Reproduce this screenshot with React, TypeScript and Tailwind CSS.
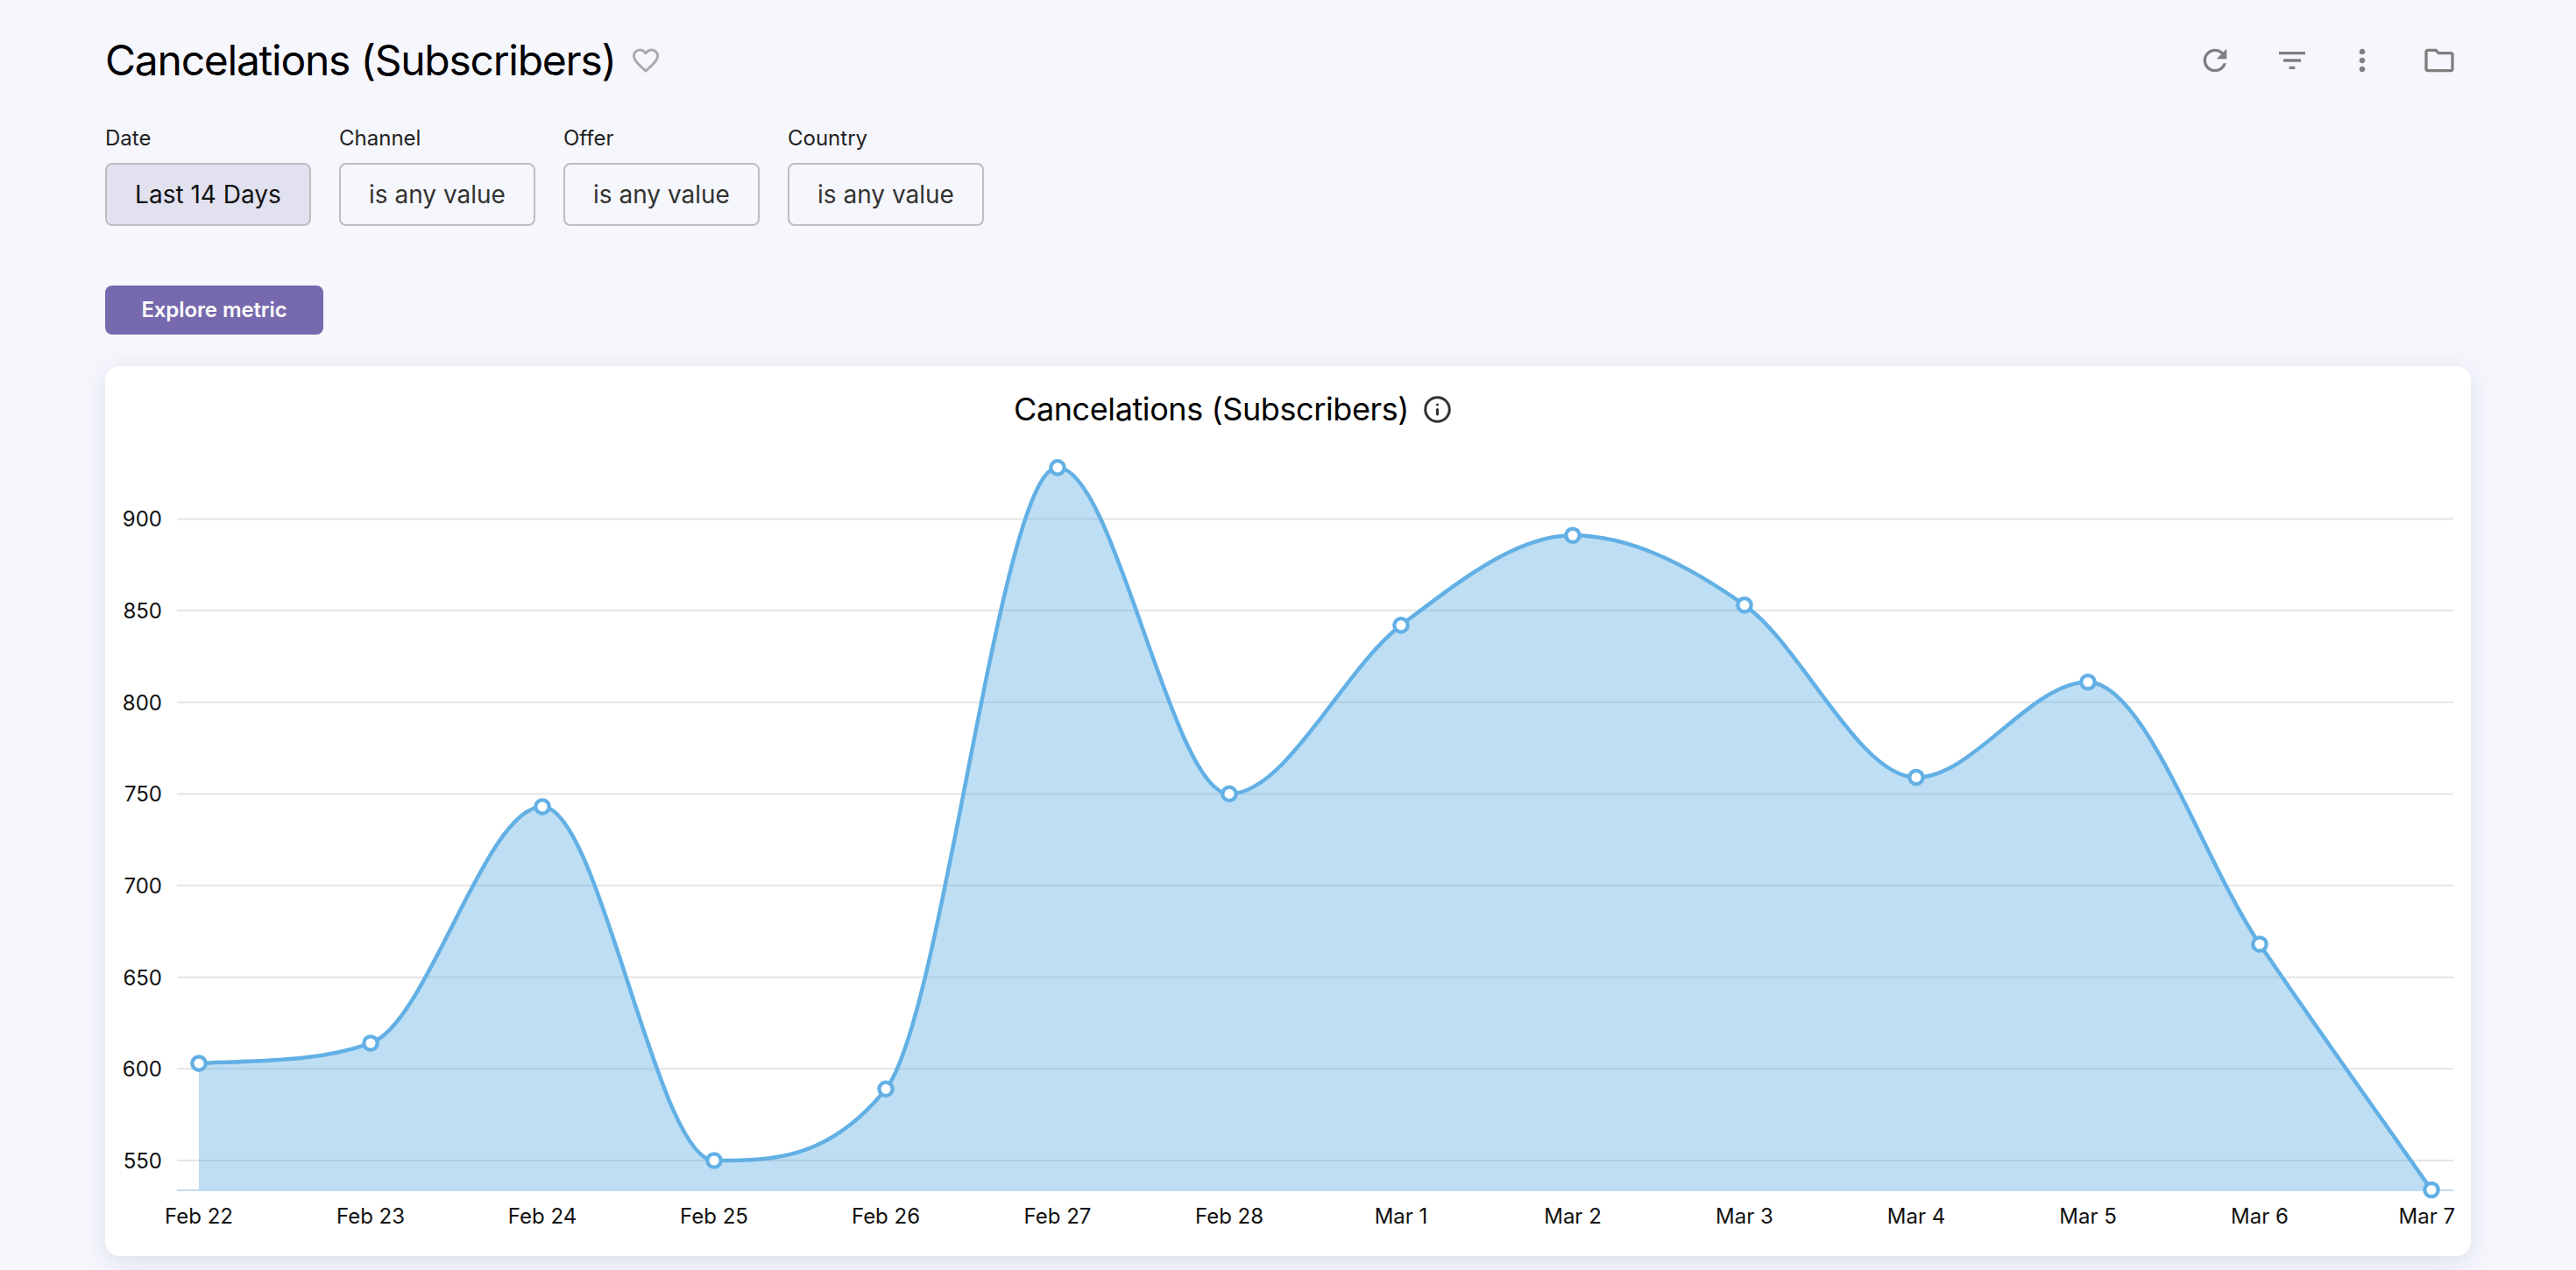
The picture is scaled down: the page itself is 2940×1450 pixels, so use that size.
import { Info } from "lucide-react";

const LABELS = ["Feb 22", "Feb 23", "Feb 24", "Feb 25", "Feb 26", "Feb 27", "Feb 28", "Mar 1", "Mar 2", "Mar 3", "Mar 4", "Mar 5", "Mar 6", "Mar 7"];
const VALUES = [603, 614, 743, 550, 589, 928, 750, 842, 891, 853, 759, 811, 668, 534];
const TICKS = [900, 850, 800, 750, 700, 650, 600, 550];

const yOf = (v: number) => 1325 - (v - 550) * 2.093;
const xOf = (i: number) => 227 + i * 196;
const BASE_Y = 1360;

// monotone cubic, same as the chart lib does it
function linePath(pts: [number, number][]) {
  const n = pts.length;
  const delta: number[] = [];
  for (let i = 0; i < n - 1; i++) delta.push((pts[i + 1][1] - pts[i][1]) / (pts[i + 1][0] - pts[i][0]));
  const m: number[] = new Array(n).fill(0);
  m[0] = delta[0];
  m[n - 1] = delta[n - 2];
  for (let i = 1; i < n - 1; i++) {
    m[i] = delta[i - 1] * delta[i] <= 0 ? 0 : (delta[i - 1] + delta[i]) / 2;
  }
  for (let i = 0; i < n - 1; i++) {
    if (delta[i] === 0) {
      m[i] = 0;
      m[i + 1] = 0;
      continue;
    }
    const a = m[i] / delta[i];
    const b = m[i + 1] / delta[i];
    const s = a * a + b * b;
    if (s > 9) {
      const t = 3 / Math.sqrt(s);
      m[i] = a * t * delta[i];
      m[i + 1] = b * t * delta[i];
    }
  }
  let d = `M${pts[0][0]} ${pts[0][1]}`;
  for (let i = 0; i < n - 1; i++) {
    const h = (pts[i + 1][0] - pts[i][0]) / 3;
    d += `C${pts[i][0] + h} ${pts[i][1] + m[i] * h} ${pts[i + 1][0] - h} ${pts[i + 1][1] - m[i + 1] * h} ${pts[i + 1][0]} ${pts[i + 1][1]}`;
  }
  return d;
}

function ToolIcon({ d, className }: { d: string; className?: string }) {
  return (
    <svg viewBox="0 0 24 24" className={`h-10 w-10 fill-[#7f7f7f] ${className ?? ""}`}>
      <path d={d} />
    </svg>
  );
}

function Filter({ label, value, active }: { label: string; value: string; active?: boolean }) {
  return (
    <div className="flex flex-col">
      <div className="mb-3 h-8 text-[24px] leading-8 text-[#222]">{label}</div>
      <div
        className={
          active
            ? "flex h-[72px] w-[235px] items-center justify-center rounded-lg border-2 border-[#bdbdc4] bg-[#e2e1f0] text-[28px] text-[#111]"
            : "flex h-[72px] w-[224px] items-center justify-center rounded-lg border-2 border-[#bdbdc4] text-[28px] text-[#333]"
        }
      >
        {value}
      </div>
    </div>
  );
}

function Chart() {
  const pts = VALUES.map((v, i) => [xOf(i), yOf(v)] as [number, number]);
  const line = linePath(pts);
  const area = `${line}L${xOf(13)} ${BASE_Y}L${xOf(0)} ${BASE_Y}Z`;
  return (
    <svg viewBox="120 498 2700 936" className="block h-[936px] w-[2700px]">
      {TICKS.map((t) => (
        <g key={t}>
          <line x1={202} x2={2800} y1={yOf(t)} y2={yOf(t)} stroke="#e5e5e5" strokeWidth={2} />
          <text x={185} y={yOf(t) + 9} textAnchor="end" fontSize={24} fill="#111">
            {t}
          </text>
        </g>
      ))}
      <line x1={202} x2={227} y1={1359} y2={1359} stroke="#c9d8ee" strokeWidth={2} />
      <line x1={2775} x2={2800} y1={1359} y2={1359} stroke="#c9d8ee" strokeWidth={2} />
      <path d={area} fill="rgba(93,173,226,0.4)" />
      <path d={line} fill="none" stroke="#62b0e5" strokeWidth={4.5} />
      {pts.map(([x, y], i) => (
        <circle key={i} cx={x} cy={y} r={7.7} fill="#fff" stroke="#62b0e5" strokeWidth={4.3} />
      ))}
      {LABELS.map((l, i) => (
        <text
          key={l}
          x={i === 13 ? 2802 : xOf(i)}
          y={1397}
          textAnchor={i === 13 ? "end" : "middle"}
          fontSize={24}
          fill="#111"
        >
          {l}
        </text>
      ))}
    </svg>
  );
}

export default function App() {
  return (
    <div className="min-h-screen bg-[#f6f7fd] px-[120px] pt-[49px] font-[family-name:Inter,sans-serif]">
      <div className="flex h-10 items-center pr-4">
        <h1 className="text-[48px] leading-10 font-normal tracking-[-1.25px] text-black">Cancelations (Subscribers)</h1>
        <svg viewBox="0 0 24 24" className="ml-[16px] h-9 w-9 fill-[#aaaaaa]">
          <path d="M16.5 3c-1.74 0-3.41.81-4.5 2.09C10.91 3.81 9.24 3 7.5 3 4.42 3 2 5.42 2 8.5c0 3.78 3.4 6.86 8.55 11.54L12 21.35l1.45-1.32C18.6 15.36 22 12.28 22 8.5 22 5.42 19.58 3 16.5 3zm-4.4 15.55l-.1.1-.1-.1C7.14 14.24 4 11.39 4 8.5 4 6.5 5.5 5 7.5 5c1.54 0 3.04.99 3.57 2.36h1.87C13.46 5.99 14.96 5 16.5 5c2 0 3.5 1.5 3.5 3.5 0 2.89-3.14 5.74-7.9 10.05z" />
        </svg>
        <ToolIcon
          className="ml-auto"
          d="M17.65 6.35C16.2 4.9 14.21 4 12 4c-4.42 0-7.99 3.58-7.99 8s3.57 8 7.99 8c3.73 0 6.84-2.55 7.73-6h-2.08c-.82 2.33-3.04 4-5.65 4-3.31 0-6-2.69-6-6s2.69-6 6-6c1.66 0 3.14.69 4.22 1.78L13 11h7V4l-2.35 2.35z"
        />
        <ToolIcon className="ml-12" d="M10 18h4v-2h-4v2zM3 6v2h18V6H3zm3 7h12v-2H6v2z" />
        <ToolIcon
          className="ml-10"
          d="M12 8c1.1 0 2-.9 2-2s-.9-2-2-2-2 .9-2 2 .9 2 2 2zm0 2c-1.1 0-2 .9-2 2s.9 2 2 2 2-.9 2-2-.9-2-2-2zm0 6c-1.1 0-2 .9-2 2s.9 2 2 2 2-.9 2-2-.9-2-2-2z"
        />
        <ToolIcon
          className="ml-12"
          d="M9.17 6l2 2H20v10H4V6h5.17M10 4H4c-1.1 0-1.99.9-1.99 2L2 18c0 1.1.9 2 2 2h16c1.1 0 2-.9 2-2V8c0-1.1-.9-2-2-2h-8l-2-2z"
        />
      </div>

      <div className="mt-[53px] flex gap-8">
        <Filter label="Date" value="Last 14 Days" active />
        <Filter label="Channel" value="is any value" />
        <Filter label="Offer" value="is any value" />
        <Filter label="Country" value="is any value" />
      </div>

      <button className="mt-[68px] flex h-14 w-[249px] items-center justify-center rounded-lg bg-[#7669ad] text-[24px] font-semibold tracking-[-0.1px] text-white">
        Explore metric
      </button>

      <div className="mt-9 h-[1016px] w-[2700px] rounded-2xl bg-white shadow-[0_6px_28px_rgba(30,40,90,0.12)]">
        <div className="flex h-20 items-center pt-[18px] pl-[1037px]">
          <span className="text-[36px] leading-none tracking-[-0.4px] text-black">Cancelations (Subscribers)</span>
          <Info className="ml-[16px] h-[33px] w-[33px] text-[#333]" strokeWidth={2.2} />
        </div>
        <Chart />
      </div>
    </div>
  );
}
